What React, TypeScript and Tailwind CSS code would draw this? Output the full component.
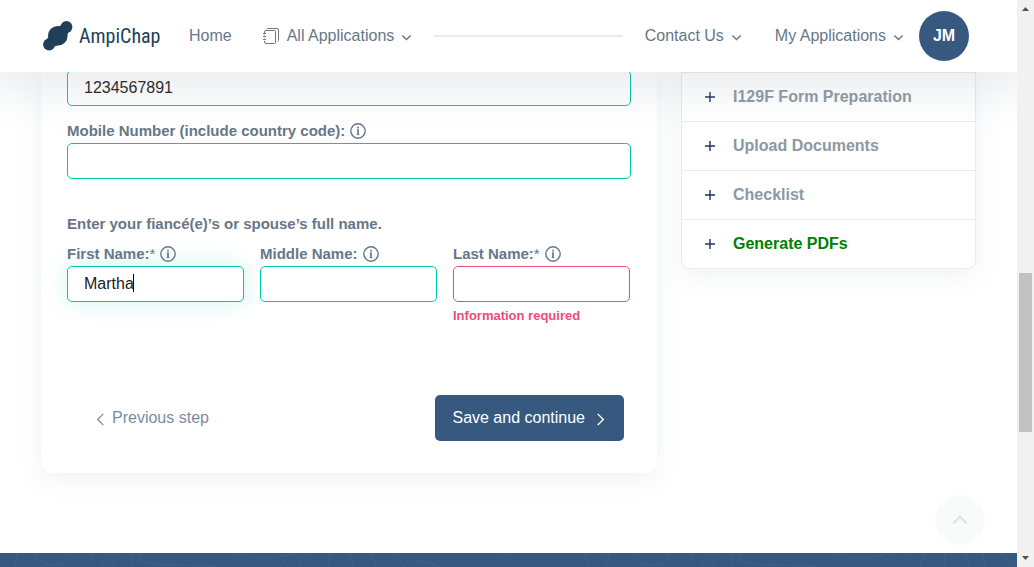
import React from "react";

type ChevronDirection = "up" | "down" | "left" | "right";

const chevronPoints: Record<ChevronDirection, string> = {
  up: "2,11 8,5 14,11",
  down: "2,5 8,11 14,5",
  left: "11,2 5,8 11,14",
  right: "5,2 11,8 5,14",
};

function Chevron({
  direction,
  className,
  strokeWidth = 2,
}: {
  direction: ChevronDirection;
  className: string;
  strokeWidth?: number;
}) {
  return (
    <svg
      viewBox="0 0 16 16"
      className={className}
      fill="none"
      stroke="currentColor"
      strokeWidth={strokeWidth}
      aria-hidden="true"
    >
      <polyline points={chevronPoints[direction]} />
    </svg>
  );
}

function LogoMark() {
  return (
    <svg viewBox="0 0 30 30" className="size-[30px] shrink-0" fill="#213f58" aria-hidden="true">
      <circle cx="14.8" cy="14.8" r="9.8" />
      <circle cx="23.5" cy="6" r="5.9" />
      <circle cx="6.1" cy="23.500" r="6" />
      <path d="M15 5.200Q17.200 5.500 18 4L25.500 11.500Q24.300 12 24.500 14Z" />
      <path d="M3.500 18Q5.200 17.500 5.100 15.500L15 24.500Q12.500 24.300 12 25.500Z" />
    </svg>
  );
}

function NotebookIcon() {
  return (
    <svg
      viewBox="0 0 16 16"
      className="size-4 shrink-0"
      fill="none"
      stroke="currentColor"
      strokeWidth="1"
      aria-hidden="true"
    >
      <path d="M3.500 1.500 4.500 .5H14a1.500 1.500 0 0 1 1.500 1.500V12.500L14.500 13.500" />
      <path d="M1.500 5V4q0-1.500 1.500-1.500H11.500q1 0 1 1V14.500q0 1-1 1H3Q1.500 15.500 1.500 14V13" />
      <path d="M0 5.500h3M0 8.500h3M0 11.500h3" />
      <path d="M1.500 6.500v1M1.500 9.500v1M1.500 12.500v1" strokeOpacity="0.5" />
    </svg>
  );
}

function InfoIcon() {
  return (
    <svg
      viewBox="0 0 16 16"
      className="size-4 shrink-0"
      fill="none"
      stroke="currentColor"
      strokeWidth="1.400"
      role="img"
      aria-label="More information"
    >
      <circle cx="8" cy="8" r="7.200" />
      <path d="M8 6.500V12" strokeWidth="1.700" />
      <path d="M6.700 6.900H8.500M6.500 11.700H9.500" strokeWidth="0.700" />
      <path d="M8 3.800V5.400" strokeWidth="1.700" />
    </svg>
  );
}

function PlusIcon() {
  return (
    <svg viewBox="0 0 10 10" className="size-[10px]" stroke="#21325b" strokeWidth="1.400" aria-hidden="true">
      <path d="M5 0V10M0 5H10" />
    </svg>
  );
}

function NavItem({ children }: { children: React.ReactNode }) {
  return (
    <a href="#" className="flex items-center gap-[7px] whitespace-nowrap">
      {children}
      <Chevron direction="down" className="mt-0.5 size-[11px]" strokeWidth={2} />
    </a>
  );
}

function Header() {
  return (
    <header className="relative z-10 flex h-[72px] items-center bg-white pr-12 pl-[43px] text-base text-[#677788] shadow-[0_10px_40px_10px_rgba(140,152,164,0.175)]">
      <a href="#" className="flex w-[118px] items-center gap-1.5 text-[#213f58]">
        <LogoMark />
        <span className="font-['Roboto_Condensed',Roboto,sans-serif] text-[20px] leading-8">
          AmpiChap
        </span>
      </a>
      <nav className="ml-7 flex flex-1 items-center">
        <a href="#">Home</a>
        <div className="ml-[31px] flex items-center gap-2">
          <NotebookIcon />
          <NavItem>All Applications</NavItem>
        </div>
        <hr className="mx-[22px] flex-1 border-t-2 border-[#e7eaf3]" />
        <NavItem>Contact Us</NavItem>
        <div className="ml-[33px]">
          <NavItem>My Applications</NavItem>
        </div>
      </nav>
      <button
        type="button"
        className="ml-[15px] size-[50px] rounded-full bg-[#37597f] text-base font-bold text-white"
      >
        JM
      </button>
    </header>
  );
}

const inputBase = "block h-9 w-full rounded-[5px] border px-4 text-base text-[#1e2022] outline-none";

function Label({ id, text, required }: { id: string; text: string; required?: boolean }) {
  return (
    <label htmlFor={id} className="flex h-6 items-center gap-[5px] text-[15px] font-bold whitespace-nowrap">
      <span>
        {text}
        {required && <span className="font-normal">*</span>}
      </span>
      <InfoIcon />
    </label>
  );
}

function FormCard() {
  return (
    <form className="min-w-0 flex-1 rounded-b-xl bg-white px-[26px] pb-8 text-[#677788] shadow-[0_6px_24px_0_rgba(140,152,164,0.125)]">
      <input
        aria-label="Phone number"
        defaultValue="1234567891"
        className={`${inputBase} border-[#00c9a7]`}
      />
      <div className="mt-[13px]">
        <Label id="mobile" text="Mobile Number (include country code):" />
        <input id="mobile" className={`${inputBase} border-[#00c9a7]`} />
      </div>
      <fieldset className="mt-[33px] pr-px">
        <legend className="mb-1.5 text-[15px] leading-6 font-bold">
          Enter your fiancé(e)’s or spouse’s full name.
        </legend>
        <div className="grid grid-cols-3 gap-4">
          <div>
            <Label id="first" text="First Name:" required />
            <div className="relative">
              <input
                id="first"
                defaultValue="Martha"
                className={`${inputBase} border-[#00c9a7] shadow-[0_0_25px_rgba(0,201,167,0.2)]`}
              />
              <span className="absolute top-2 left-[66px] h-[18px] w-px bg-black" />
            </div>
          </div>
          <div>
            <Label id="middle" text="Middle Name:" />
            <input id="middle" className={`${inputBase} border-[#00c9a7]`} />
          </div>
          <div>
            <Label id="last" text="Last Name:" required />
            <input
              id="last"
              aria-invalid="true"
              aria-describedby="last-error"
              className={`${inputBase} border-[#ed4c78]`}
            />
            <p id="last-error" className="mt-1 text-[13px] leading-5 font-bold text-[#ed4c78]">
              Information required
            </p>
          </div>
        </div>
      </fieldset>
      <div className="mt-[69px] flex items-center justify-between pr-[7px] pl-[26px]">
        <button type="button" className="flex items-center gap-1 text-base text-[#7a8ca5]">
          <Chevron direction="left" className="mt-0.5 size-[15px]" strokeWidth={1.3} />
          Previous step
        </button>
        <button
          type="button"
          className="flex h-[46px] items-center gap-2 rounded-[5px] bg-[#37597f] pr-4 pl-[17px] text-base text-white"
        >
          Save and continue
          <Chevron direction="right" className="mt-0.5 size-[15px]" strokeWidth={1.5} />
        </button>
      </div>
    </form>
  );
}

const steps = [
  { title: "I129F Form Preparation", color: "text-[#8c98a4]" },
  { title: "Upload Documents", color: "text-[#8c98a4]" },
  { title: "Checklist", color: "text-[#8c98a4]" },
  { title: "Generate PDFs", color: "text-[#008000]" },
];

function Steps() {
  return (
    <aside className="mt-0.5 w-[295px] shrink-0 self-start rounded-b-lg border-x border-[#e7eaf3] bg-white shadow-[0_6px_24px_0_rgba(140,152,164,0.125)]">
      <ul className="border-t border-[#e7eaf3]">
        {steps.map((step) => (
          <li key={step.title} className="border-b border-[#e7eaf3] last:rounded-b-lg">
            <button
              type="button"
              className={`flex h-12 w-full items-center gap-[18px] pl-[23px] text-base font-bold ${step.color}`}
            >
              <PlusIcon />
              {step.title}
            </button>
          </li>
        ))}
      </ul>
    </aside>
  );
}

function Footer() {
  return (
    <footer className="h-[14px] overflow-hidden bg-[#37597f]">
      <svg
        viewBox="0 0 1017 14"
        preserveAspectRatio="none"
        className="h-full w-full"
        fill="none"
        stroke="#ffffff"
        strokeOpacity="0.05"
        aria-hidden="true"
      >
        <path d="M18 0L14 14M34 0Q38 12 55 12T75 0M94 0L86 14M108 0L101 14M119 0L112 14M134 0L130 14M142 0L139 8Q150 12 180 12L220 14" />
        <path d="M235 0Q265 10 295 0M290 0L280 14M305 0L300 14M330 0L328 14M350 0L353 14M372 0L376 14M395 0L405 14M412 14Q415 6 430 10L440 14M507 0L495 14" />
        <path d="M585 0L588 14M610 0L605 14M632 0Q638 12 652 12T670 0M694 0L686 14M708 0L701 14M719 0L712 14M734 0L730 14M742 0L739 8Q750 12 780 12L820 14M835 0Q860 10 890 0" />
        <path d="M892 0L880 14M911 0L905 14M924 0L920 14M945 0L944 14M966 0L969 14M982 0L986 14M1000 0L1014 14" />
      </svg>
    </footer>
  );
}

function ScrollRail() {
  return (
    <div className="flex w-[17px] shrink-0 flex-col items-center justify-between bg-[#f1f1f1]" aria-hidden="true">
      <svg viewBox="0 0 17 17" className="size-[17px]" fill="#505050">
        <path d="M5 11L8.500 7L12 11Z" />
      </svg>
      <div className="flex w-full flex-1 flex-col px-0.5">
        <div className="flex-[256]" />
        <div className="flex-[159] bg-[#c1c1c1]" />
        <div className="flex-[118]" />
      </div>
      <svg viewBox="0 0 17 17" className="size-[17px]" fill="#505050">
        <path d="M5 6L8.500 10L12 6Z" />
      </svg>
    </div>
  );
}

export default function App() {
  return (
    <div className="flex min-h-screen bg-white font-['Liberation_Sans',Arial,sans-serif]">
      <div className="relative flex min-w-0 flex-1 flex-col overflow-hidden">
        <Header />
        <main className="-mt-0.5 flex flex-1 items-start gap-6 px-[41px] pb-20">
          <FormCard />
          <Steps />
        </main>
        <Footer />
        <button
          type="button"
          aria-label="Back to top"
          className="absolute right-8 bottom-[22px] flex size-[50px] items-center justify-center rounded-full bg-[#f9fbfb] text-[#dcdfe6]"
        >
          <Chevron direction="up" className="size-[18px]" strokeWidth={1.8} />
        </button>
      </div>
      <ScrollRail />
    </div>
  );
}
